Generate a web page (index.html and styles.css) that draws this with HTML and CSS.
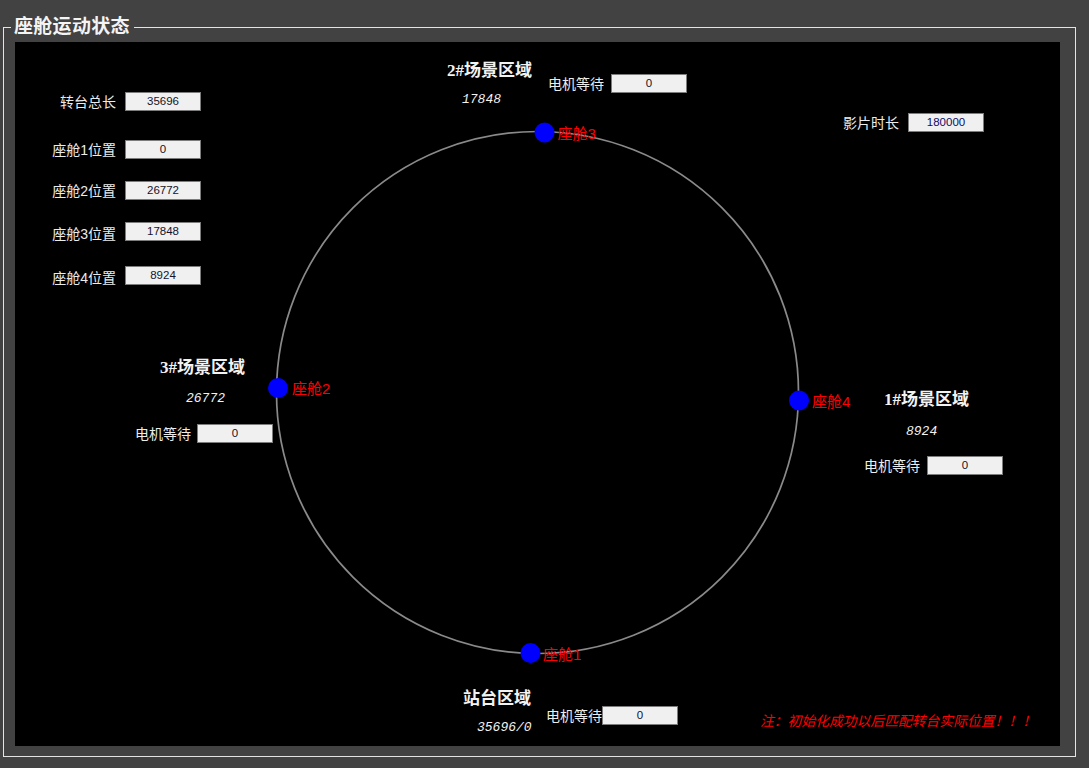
FILE: index.html
```html
<!DOCTYPE html>
<html lang="zh">
<head>
<meta charset="utf-8">
<title>座舱运动状态</title>
<link rel="stylesheet" href="styles.css">
</head>
<body>
<div class="group">
  <div class="group-title">座舱运动状态</div>
  <div class="panel">
    <svg class="diagram" width="1045" height="704" viewBox="0 0 1045 704">
      <circle cx="522.5" cy="350.5" r="261" fill="none" stroke="#8a8a8a" stroke-width="1.7"/>
      <circle cx="529.5" cy="90.5" r="10" fill="#0000ff"/>
      <circle cx="263" cy="346" r="10" fill="#0000ff"/>
      <circle cx="784" cy="358.5" r="10" fill="#0000ff"/>
      <circle cx="515.5" cy="611" r="10" fill="#0000ff"/>
      <text class="seat" x="542.5" y="91">座舱3</text>
      <text class="seat" x="277" y="346.5">座舱2</text>
      <text class="seat" x="797" y="359">座舱4</text>
      <text class="seat" x="528" y="612">座舱1</text>
    </svg>

    <div class="form">
      <span class="lbl">转台总长</span><div class="box">35696</div>
      <span class="lbl">座舱1位置</span><div class="box">0</div>
      <span class="lbl">座舱2位置</span><div class="box">26772</div>
      <span class="lbl">座舱3位置</span><div class="box">17848</div>
      <span class="lbl">座舱4位置</span><div class="box">8924</div>
    </div>

    <div class="zone zone-2">
      <div class="zone-name">2#场景区域</div>
      <div class="zone-pos">17848</div>
    </div>
    <div class="zone zone-3">
      <div class="zone-name">3#场景区域</div>
      <div class="zone-pos">26772</div>
    </div>
    <div class="zone zone-1">
      <div class="zone-name">1#场景区域</div>
      <div class="zone-pos">8924</div>
    </div>
    <div class="zone zone-0">
      <div class="zone-name">站台区域</div>
      <div class="zone-pos">35696/0</div>
    </div>

    <div class="field motor-2"><span class="lbl">电机等待</span><div class="box">0</div></div>
    <div class="field motor-3"><span class="lbl">电机等待</span><div class="box">0</div></div>
    <div class="field motor-1"><span class="lbl">电机等待</span><div class="box">0</div></div>
    <div class="field motor-0"><span class="lbl">电机等待</span><div class="box">0</div></div>
    <div class="field film"><span class="lbl">影片时长</span><div class="box box-blue">180000</div></div>

    <div class="note">注：初始化成功以后匹配转台实际位置！！！</div>
  </div>
</div>
</body>
</html>
```

FILE: styles.css
```css
html, body {
  margin: 0;
  padding: 0;
  background: #424242;
  width: 1089px;
  height: 768px;
  overflow: hidden;
}

.group {
  position: relative;
  margin: 27px 13px 0 3px;
  border: 1px solid #e4e4e4;
  padding: 14px 15px 10px 11px;
}

.group-title {
  position: absolute;
  left: 7px;
  top: -14px;
  padding: 0 4px 0 3px;
  background: #424242;
  color: #f4f4f4;
  font-family: "Noto Sans CJK SC", sans-serif;
  font-weight: 700;
  font-size: 19px;
  letter-spacing: 0.3px;
  line-height: 22px;
}

.panel {
  position: relative;
  width: 1045px;
  height: 704px;
  background: #000;
  overflow: hidden;
}

.diagram {
  position: absolute;
  left: 0;
  top: 0;
}

.seat {
  fill: #ff0000;
  font-family: "Liberation Sans", "Noto Sans CJK SC", sans-serif;
  font-size: 15px;
  dominant-baseline: central;
}

.lbl {
  color: #ececec;
  font-family: "Liberation Sans", "Noto Sans CJK SC", sans-serif;
  font-size: 14px;
  line-height: 19px;
  white-space: nowrap;
}

.box {
  box-sizing: border-box;
  width: 76px;
  height: 19px;
  background: #f0f0f0;
  border: 1px solid #7c7c7c;
  color: #14142a;
  font-family: "Liberation Sans", sans-serif;
  font-size: 11.5px;
  line-height: 17px;
  text-align: center;
}

.box-blue {
  color: #0d0d66;
}

.form {
  position: relative;
  display: grid;
  grid-template-columns: 71px 76px;
  grid-template-rows: 48px 41px 41px 44px 19px;
  column-gap: 9px;
  margin: 50px 0 0 30px;
  width: 156px;
}

.form .lbl {
  justify-self: end;
  align-self: start;
  padding-top: 1px;
}

.form .lbl:nth-of-type(4),
.form .lbl:nth-of-type(5) {
  padding-top: 3px;
}

.zone {
  position: absolute;
  color: #f2f2f2;
}

.zone-name {
  font-family: "Liberation Serif", "Noto Sans CJK SC", serif;
  font-weight: 700;
  font-size: 17px;
  line-height: 20px;
  white-space: nowrap;
}

.zone-pos {
  font-family: "Liberation Mono", monospace;
  font-style: italic;
  font-size: 13px;
  line-height: 16px;
  white-space: nowrap;
}

.zone-2 { left: 432px; top: 19px; }
.zone-2 .zone-pos { margin: 11px 0 0 15px; }

.zone-3 { left: 145px; top: 316px; }
.zone-3 .zone-pos { margin: 13px 0 0 26px; }

.zone-1 { left: 869px; top: 348px; }
.zone-1 .zone-pos { margin: 14px 0 0 22px; }

.zone-0 { left: 448px; top: 647px; }
.zone-0 .zone-pos { margin: 11px 0 0 14px; }

.field {
  position: absolute;
  display: flex;
  align-items: center;
  gap: 8px;
}

.field .lbl {
  padding-top: 2px;
}

.motor-2 { left: 533px; top: 31px; gap: 7px; }
.motor-3 { left: 120px; top: 381px; gap: 6px; }
.motor-1 { left: 849px; top: 413px; gap: 7px; }
.motor-0 { left: 531px; top: 663px; gap: 0; }
.film { left: 828px; top: 70px; gap: 9px; }

.note {
  position: absolute;
  left: 745px;
  top: 669px;
  color: #ff0000;
  font-family: "Noto Sans CJK SC", sans-serif;
  font-style: italic;
  font-size: 13.8px;
  line-height: 18px;
  white-space: nowrap;
}
```
